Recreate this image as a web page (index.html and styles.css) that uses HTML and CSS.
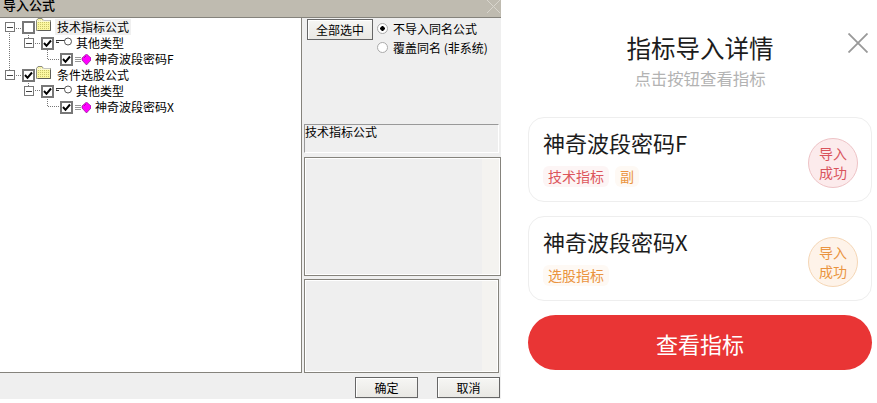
FILE: index.html
```html
<!DOCTYPE html>
<html lang="en">
<head>
  <meta charset="UTF-8" />
  <title>指标导入详情</title>
  <link rel="stylesheet" href="styles.css">
</head>
<body>
  <svg class="defs" width="0" height="0">
    <pattern id="dither" width="2" height="2" patternUnits="userSpaceOnUse">
      <rect width="2" height="2" fill="#fbf7a0"/>
      <rect width="1" height="1" fill="#c9c46a"/>
    </pattern>
    <symbol id="folder" viewBox="0 0 15 13">
      <path d="M0.5 12.5V2.5L2 0.5H6L7.5 2.5H14.5V12.5Z" fill="url(#dither)" stroke="#8a8a80"/>
      <path d="M1 3H14" stroke="#fff"/>
      <path d="M2 12.5H14.5V4" fill="none" stroke="#5d5d58"/>
    </symbol>
    <symbol id="key" viewBox="0 0 16 9">
      <path d="M0 3.5H9M0 5.5H3M0 3.5V6" fill="none" stroke="#333"/>
      <circle cx="12" cy="4.5" r="3.5" fill="#fff" stroke="#555"/>
    </symbol>
    <symbol id="gem" viewBox="0 0 16 11">
      <path d="M0 3.5H6M0 5.5H6M0 7.5H6" stroke="#999"/>
      <path d="M11.5 0L16 4V6L11.5 11L7 6V4Z" fill="#f0f" stroke="#7a0a7a" stroke-width=".6"/>
      <path d="M9 4L11 2" stroke="#a0a" stroke-width=".8"/>
    </symbol>
    <symbol id="tick" viewBox="0 0 9 9">
      <path d="M1 4L3.5 6.8L8 1.5" fill="none" stroke="#000" stroke-width="2"/>
    </symbol>
  </svg>

  <!-- Import dialog -->
  <section class="dialog">
    <div class="titlebar">
      <span>导入公式</span>
      <svg class="dialog-close" width="13" height="13" viewBox="0 0 13 13"><path d="M0 0L13 13M13 0L0 13" stroke="#d8d5cd"/></svg>
    </div>
    <div class="dialog-body">
      <div class="tree">
        <svg class="tree-lines" width="100" height="120" viewBox="0 0 100 120">
          <path d="M9.5 14V62M14 9.5H22M33 24.5H41M28.5 14V20M47.5 31V40.5H60M14 56.5H22M33 71.5H41M28.5 62V67M47.5 78V87.5H60" fill="none" stroke="#777" stroke-dasharray="1 1"/>
        </svg>
        <div class="row level-0">
          <span class="expander"></span>
          <span class="check"></span>
          <svg class="icon-folder"><use href="#folder"/></svg>
          <span class="label selected">技术指标公式</span>
        </div>
        <div class="row level-1">
          <span class="expander"></span>
          <span class="check"><svg><use href="#tick"/></svg></span>
          <svg class="icon-key"><use href="#key"/></svg>
          <span class="label">其他类型</span>
        </div>
        <div class="row level-2">
          <span class="check"><svg><use href="#tick"/></svg></span>
          <svg class="icon-gem"><use href="#gem"/></svg>
          <span class="label">神奇波段密码F</span>
        </div>
        <div class="row level-0">
          <span class="expander"></span>
          <span class="check"><svg><use href="#tick"/></svg></span>
          <svg class="icon-folder"><use href="#folder"/></svg>
          <span class="label">条件选股公式</span>
        </div>
        <div class="row level-1">
          <span class="expander"></span>
          <span class="check"><svg><use href="#tick"/></svg></span>
          <svg class="icon-key"><use href="#key"/></svg>
          <span class="label">其他类型</span>
        </div>
        <div class="row level-2">
          <span class="check"><svg><use href="#tick"/></svg></span>
          <svg class="icon-gem"><use href="#gem"/></svg>
          <span class="label">神奇波段密码X</span>
        </div>
      </div>
      <div class="side">
        <div class="side-top">
          <button class="win-btn select-all">全部选中</button>
          <div class="radios">
            <div class="radio-row"><span class="radio on"></span>不导入同名公式</div>
            <div class="radio-row"><span class="radio"></span>覆盖同名 (非系统)</div>
          </div>
        </div>
        <div class="desc">技术指标公式</div>
        <div class="box box-mid"></div>
        <div class="box box-low"></div>
      </div>
    </div>
    <div class="dialog-foot">
      <button class="win-btn foot-btn">确定</button>
      <button class="win-btn foot-btn">取消</button>
    </div>
  </section>

  <!-- Mobile detail sheet -->
  <section class="sheet">
    <svg class="sheet-close" width="20" height="20" viewBox="0 0 20 20"><path d="M0.5 0.5L19.5 19.5M19.5 0.5L0.5 19.5" stroke="#999" stroke-width="1.8"/></svg>
    <h2 class="sheet-title">指标导入详情</h2>
    <p class="sheet-sub">点击按钮查看指标</p>
    <div class="card">
      <div class="card-info">
        <div class="card-name">神奇波段密码F</div>
        <div class="tags">
          <span class="tag tag-red">技术指标</span>
          <span class="tag tag-orange">副</span>
        </div>
      </div>
      <div class="stamp stamp-red">导入<br>成功</div>
    </div>
    <div class="card">
      <div class="card-info">
        <div class="card-name">神奇波段密码X</div>
        <div class="tags">
          <span class="tag tag-orange">选股指标</span>
        </div>
      </div>
      <div class="stamp stamp-orange">导入<br>成功</div>
    </div>
    <button class="view-btn">查看指标</button>
  </section>
</body>
</html>
```

FILE: styles.css
```css
* {
  margin: 0;
  padding: 0;
  box-sizing: border-box;
}
body {
  width: 877px;
  height: 403px;
  display: flex;
  overflow: hidden;
  background-color: #fff;
  font-family: "Noto Sans CJK SC", "Noto Sans", sans-serif;
  color: #000;
}
.defs {
  position: absolute;
}

/* Import dialog */
.dialog {
  width: 501px;
  height: 399px;
  display: flex;
  flex-direction: column;
  background-color: #efefef;
  font-size: 12px;
}
.titlebar {
  height: 18px;
  flex-shrink: 0;
  display: flex;
  justify-content: space-between;
  background-color: #bfbbb0;
  border-bottom: 1px solid #85837c;
  overflow: hidden;
}
.titlebar span {
  margin: -4px 0 0 3px;
  font-size: 13px;
  line-height: 18px;
  font-weight: 500;
}
.dialog-close {
  margin-right: 1px;
}
.dialog-body {
  height: 355px;
  display: flex;
}
.tree {
  position: relative;
  width: 302px;
  padding-top: 1px;
  background-color: #fff;
  border-right: 1px solid #85837c;
  border-bottom: 1px solid #85837c;
}
.tree-lines {
  position: absolute;
  left: 0;
  top: 1px;
}
.row {
  position: relative;
  height: 16px;
  display: flex;
  align-items: center;
  white-space: nowrap;
}
.level-0 { padding-left: 5px; }
.level-1 { padding-left: 24px; }
.level-2 { padding-left: 60px; }
.expander {
  width: 10px;
  height: 10px;
  margin-right: 7px;
  background: linear-gradient(#444, #444) center / 6px 1px no-repeat #fff;
  border: 1px solid #777;
}
.check {
  width: 13px;
  height: 13px;
  display: flex;
  align-items: center;
  justify-content: center;
  background-color: #fff;
  border: 2px solid #777;
}
.check svg {
  width: 9px;
  height: 9px;
}
.icon-folder {
  width: 15px;
  height: 13px;
  margin: -5px 6px 0 1px;
}
.icon-key {
  width: 16px;
  height: 9px;
  margin: -3px 4px 0 2px;
}
.icon-gem {
  width: 16px;
  height: 11px;
  margin: 0 4px 0 2px;
}
.label {
  line-height: 16px;
}
.selected {
  margin-left: -2px;
  padding: 0 2px;
  background-color: #f0f0f0;
}

/* Dialog right column */
.side {
  width: 199px;
  padding-left: 2px;
  display: flex;
  flex-direction: column;
}
.side-top {
  height: 107px;
  padding: 1px 0 0 3px;
  display: flex;
}
.win-btn {
  font: inherit;
  color: #000;
  background: linear-gradient(#f6f6f4, #e9e8e4);
  border: 1px solid #666;
  box-shadow: inset 1px 1px 0 #fff;
}
.select-all {
  width: 66px;
  height: 21px;
}
.radios {
  margin-left: 4px;
}
.radio-row {
  height: 19px;
  display: flex;
  align-items: center;
  gap: 5px;
  white-space: pre;
}
.radio {
  width: 11px;
  height: 11px;
  flex-shrink: 0;
  border-radius: 50%;
  background-color: #fff;
  border: 1px solid #aaa;
}
.radio.on {
  background: radial-gradient(circle, #000 0 2px, #fff 2.5px);
}
.desc {
  width: 195px;
  height: 29px;
  line-height: 14px;
  border: 1px solid #999;
  border-bottom-color: #fff;
  border-right-color: #fff;
  white-space: nowrap;
}
.box {
  background: linear-gradient(#efefef, #efefef) left / 177px 100% no-repeat #f4f3f0;
  border: 1px solid #85837c;
  box-shadow: inset 0 0 0 1px #fff;
}
.box-mid {
  width: 197px;
  height: 119px;
  margin-top: 4px;
}
.box-low {
  width: 195px;
  height: 95px;
  margin-top: 3px;
}
.dialog-foot {
  height: 26px;
  padding: 4px 1px 1px 0;
  display: flex;
  justify-content: flex-end;
  gap: 19px;
}
.foot-btn {
  width: 63px;
  height: 21px;
}

/* Mobile detail sheet */
.sheet {
  position: relative;
  width: 344px;
  margin-left: 27px;
  padding-top: 30px;
}
.sheet-close {
  position: absolute;
  top: 33px;
  right: 4px;
}
.sheet-title {
  font-size: 24.5px;
  line-height: 36px;
  font-weight: 400;
  text-align: center;
  color: #1c1c1c;
}
.sheet-sub {
  margin-top: 1px;
  font-size: 16.4px;
  line-height: 23px;
  text-align: center;
  color: #b3b3b3;
}
.card {
  height: 85px;
  margin-top: 14px;
  padding: 0 13px 0 14px;
  display: flex;
  align-items: flex-start;
  justify-content: space-between;
  border: 1px solid #eee;
  border-radius: 16px;
}
.sheet-sub + .card {
  margin-top: 27px;
}
.card-info {
  margin-top: 8px;
}
.card-name {
  font-size: 22px;
  line-height: 32px;
  color: #1c1c1c;
}
.tags {
  margin-top: 8px;
  display: flex;
  gap: 6px;
}
.tag {
  height: 21px;
  padding: 0 5px;
  font-size: 14px;
  line-height: 21px;
  border-radius: 6px;
}
.tag-red {
  color: #dc555c;
  background-color: #fdf5f5;
}
.tag-orange {
  color: #ea9440;
  background-color: #fef9f4;
}
.stamp {
  width: 50px;
  height: 50px;
  margin-top: 20px;
  display: flex;
  align-items: center;
  justify-content: center;
  text-align: center;
  font-size: 14px;
  line-height: 19px;
  border-radius: 50%;
}
.stamp-red {
  color: #d9545c;
  background-color: #fcebec;
  border: 1px solid #eec3c6;
}
.stamp-orange {
  color: #ea9440;
  background-color: #fef3e9;
  border: 1px solid #f5d6b5;
}
.view-btn {
  width: 344px;
  height: 55px;
  margin-top: 14px;
  font: inherit;
  font-size: 22px;
  color: #fff;
  background-color: #e93535;
  border: none;
  border-radius: 28px;
}
```
